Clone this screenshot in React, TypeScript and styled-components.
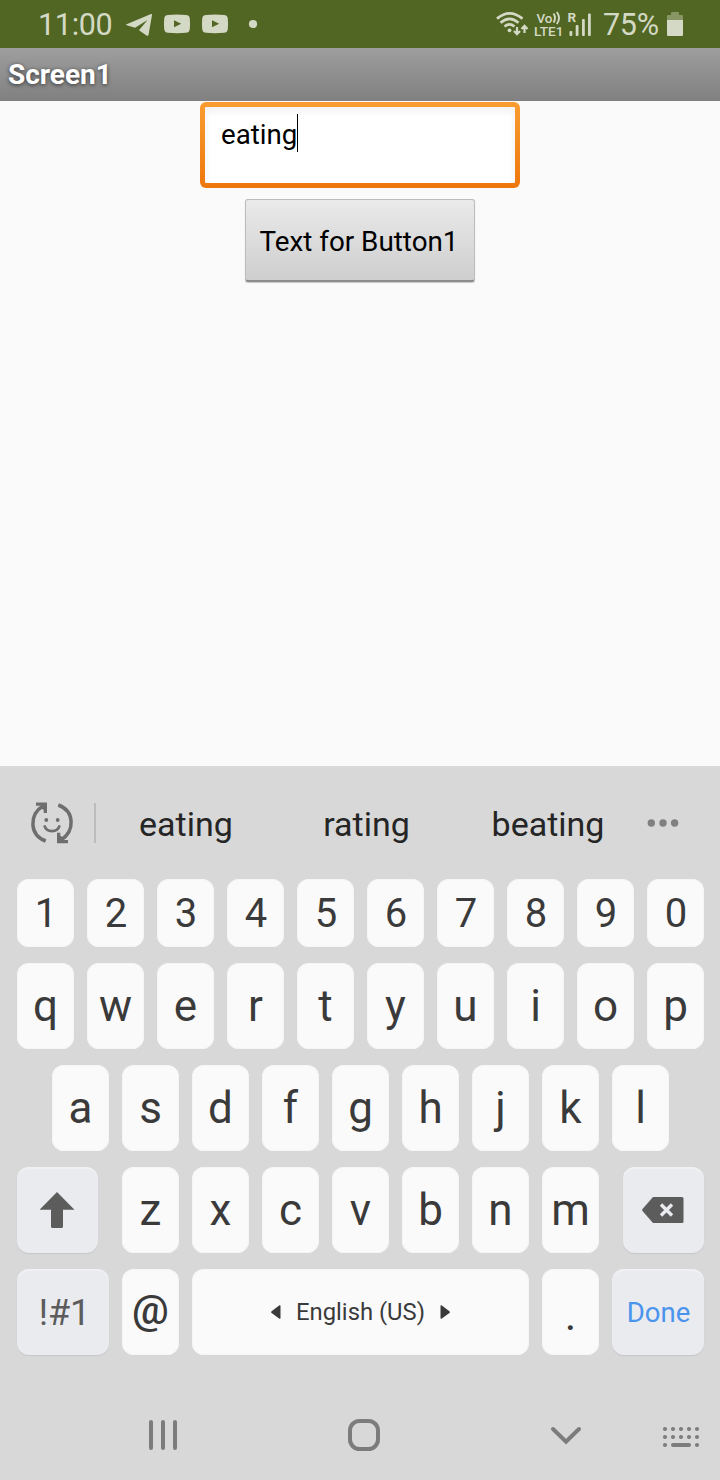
import React from "react";
import styled, { createGlobalStyle } from "styled-components";

const GlobalStyle = createGlobalStyle`
  * { box-sizing: border-box; }
  body { margin: 0; background: #fafafa; font-family: Roboto, "Liberation Sans", sans-serif; }
`;

const Phone = styled.div`
  display: flex;
  flex-direction: column;
  width: 720px;
  height: 1480px;
  overflow: hidden;
  background: #fafafa;
`;

const StatusBar = styled.header`
  display: flex;
  justify-content: space-between;
  height: 48px;
  flex: none;
  background: #526623;
  color: #d3d9c4;
`;

const StatusGroup = styled.div`
  display: flex;
  height: 48px;
`;

const StatusText = styled.span<{ $left: number; $width: number }>`
  margin-left: ${(p) => p.$left}px;
  width: ${(p) => p.$width}px;
  font-size: 30.5px;
  letter-spacing: -0.3px;
  line-height: 50px;
  white-space: nowrap;
`;

const TitleBar = styled.div`
  flex: none;
  height: 53px;
  padding-left: 8px;
  background: linear-gradient(#9e9e9e, #808080);
  color: #fff;
  font-size: 28px;
  font-weight: 700;
  line-height: 54px;
  text-shadow: 0 1px 4px rgba(0, 0, 0, 0.65);
`;

const Content = styled.main`
  display: flex;
  flex: 1;
  flex-direction: column;
  align-items: center;
  padding-top: 1px;
`;

const TextBox = styled.div`
  width: 320px;
  height: 86px;
  padding: 5px;
  border-radius: 6px;
  background: linear-gradient(#f99d31, #ee770c);
`;

const TextBoxInner = styled.div`
  display: flex;
  height: 76px;
  padding: 7px 16px;
  border-radius: 1px;
  background: #fff;
  box-shadow: inset 0 4px 8px rgba(0, 0, 0, 0.06);
  color: #000;
  font-size: 27.700px;
  line-height: 42px;
`;

const Caret = styled.span`
  width: 1px;
  height: 38px;
  background: #000;
`;

const FormButton = styled.button`
  width: 230px;
  height: 83px;
  margin: 11px 0 0;
  padding: 2px 2px 0 0;
  border: 1px solid #bcbcbc;
  border-bottom: 2px solid #8c8c8c;
  border-radius: 3px;
  background: linear-gradient(#eaeaea, #cecece);
  box-shadow: 0 1px 1px rgba(0, 0, 0, 0.2);
  color: #000;
  font-family: inherit;
  font-size: 27.800px;
  white-space: nowrap;
`;

const Keyboard = styled.section`
  flex: none;
  height: 714px;
  background: #d8d8d8;
`;

const Suggestions = styled.div`
  display: flex;
  height: 113px;
`;

const Divider = styled.span`
  width: 2px;
  height: 40px;
  margin: 37px 0 0 20px;
  background: #bcbcbc;
`;

const Suggestion = styled.span<{ $width: number }>`
  width: ${(p) => p.$width}px;
  color: #252525;
  font-size: 34px;
  line-height: 117px;
  text-align: center;
`;

const KeyRows = styled.div`
  display: flex;
  flex-direction: column;
  gap: 16px;
  padding: 0 16px 0 17px;
`;

const KeyRow = styled.div<{ $height?: number; $indent?: number }>`
  display: flex;
  gap: 13px;
  height: ${(p) => p.$height ?? 86}px;
  padding-left: ${(p) => p.$indent ?? 0}px;
`;

const Key = styled.div<{ $size?: number; $width?: number; $color?: string }>`
  display: flex;
  flex: none;
  align-items: center;
  justify-content: center;
  width: ${(p) => p.$width ?? 57}px;
  border-radius: 12px;
  background: #fafafa;
  box-shadow: inset 0 0 0 1px #f5f5f5;
  color: ${(p) => p.$color ?? "#3a3a3a"};
  font-size: ${(p) => p.$size ?? 44}px;
  line-height: 1;
`;

const NumberKey = styled(Key)`
  padding: 2px 0 0 1px;
`;

const AtKey = styled(Key)`
  padding-bottom: 3px;
  font-weight: 500;
`;

const FunctionKey = styled(Key)<{ $before?: number; $after?: number; $shift?: number }>`
  margin-left: ${(p) => p.$before ?? 0}px;
  margin-right: ${(p) => p.$after ?? 0}px;
  padding: ${(p) => (p.$shift ? 2 : 0)}px 0 0 ${(p) => p.$shift ?? 0}px;
  background: #e9ebef;
  box-shadow: inset 0 2px 1px #f0f1f3, 0 1px 1px #c6c7ca;
`;

const Period = styled(Key)`
  padding-top: 5px;
`;

const SpaceLabel = styled.span`
  width: 159px;
  padding-top: 1px;
  font-size: 23.800px;
  text-align: center;
`;

const NavIcons = styled.svg`
  display: block;
  margin-top: 35px;
`;

function NotificationIcons() {
  return (
    <svg width="140" height="48" viewBox="120 0 140 48" fill="#d3d9c4">
      <path d="M126 24.600 151 14q1.200-.4 1 .9l-3.400 19.600q-.4 2-2.100 1l-7.500-5.300 8.500-10.300-12.500 7.800-7.500-2.100q-2-.4-1.500-1z" />
      <YouTube x={164} />
      <YouTube x={202} />
      <circle cx="253" cy="24" r="4.1" />
    </svg>
  );
}

function YouTube({ x }: { x: number }) {
  return (
    <g transform={`translate(${x} 14.500)`}>
      <path fillRule="evenodd" d="M4 .5Q13 -.3 22 .5 25.500.7 25.800 4 26.300 9.300 25.800 14.500 25.500 18 22 18.300 13 19 4 18.300.5 18 .2 14.500-.3 9.300.2 4 .5.7 4 .5zM10 5.800v7l7.200-3.500z" />
    </g>
  );
}

function SignalIcons() {
  return (
    <svg width="98" height="48" viewBox="496 0 98 48" fill="#d3d9c4">
      <g fill="none" stroke="#d3d9c4" strokeWidth="2.700">
        <path d="M497 18.600Q509.500 8 522.500 18.600M500.500 22.800Q509.500 14.800 518.500 22.800M504.500 26.500Q509.500 22.300 514.500 26.500" />
        <path strokeWidth="2.200" d="M517 27v7m-3-3 3 3.200 3-3.200M524.500 33v-7m-3 3 3-3.200 3 3.200" />
        <path strokeWidth="1.900" d="M553.500 13.500q3 4.500 0 9M556.800 12q4.500 6 0 12" />
      </g>
      <circle cx="509.500" cy="30.300" r="1.900" />
      <g fontFamily="Roboto, sans-serif" fontWeight="500">
        <text x="536.500" y="22.600" fontSize="13.500" textLength="16" lengthAdjust="spacingAndGlyphs">Vo</text>
        <text x="534" y="36" fontSize="13.500" textLength="29.500" lengthAdjust="spacingAndGlyphs">LTE1</text>
        <text x="567.500" y="22" fontSize="13.500" fontWeight="700">R</text>
      </g>
      <rect x="569.500" y="31" width="2.800" height="5" rx="1" />
      <rect x="575.700" y="25" width="2.800" height="11" rx="1" />
      <rect x="582" y="19" width="2.800" height="17" rx="1" />
      <rect x="588" y="13.500" width="2.800" height="22.500" rx="1" />
    </svg>
  );
}

function BatteryIcon() {
  return (
    <svg width="53" height="48" viewBox="667 0 53 48" fill="#d3d9c4">
      <path fillOpacity=".42" d="M671 15v-2q0-1 1-1h6q1 0 1 1v2h3q1 0 1 1v4h-16v-4q0-1 1-1z" />
      <path d="M667 20h16v15q0 1-1 1h-14q-1 0-1-1z" />
    </svg>
  );
}

function EmojiSwapIcon() {
  return (
    <svg width="74" height="113" viewBox="0 766 74 113">
      <g fill="none" stroke="#6e6e6e" strokeWidth="3.500">
        <path d="M45.700 841C29.500 835 28.500 815 43.500 805.500" />
        <path d="M58.300 805C74.500 811 75.500 831 60.500 840.500" />
        <path strokeWidth="2.700" d="M44.300 825.300q1.800 5.800 7.700 5.800t7.700-5.800" />
      </g>
      <g fill="#6e6e6e">
        <path d="M36 802.500h11v10.500h-3.300v-3l-2.500-1.500.5-2.700H36z" />
        <path d="M68 843.300H57v-10.500h3.300v3l2.500 1.500-.5 2.700H68z" />
        <circle cx="46.300" cy="820" r="1.900" />
        <circle cx="57.700" cy="820" r="1.900" />
      </g>
    </svg>
  );
}

function MoreIcon() {
  return (
    <svg width="80" height="113" viewBox="640 766 80 113" fill="#808080">
      {[652.3, 664, 675.6].map((cx) => (
        <circle key={cx} cx={cx} cy="823" r="3.700" />
      ))}
    </svg>
  );
}

const topLetters = "qwertyuiop".split("");
const homeLetters = "asdfghjkl".split("");
const bottomLetters = "zxcvbnm".split("");

export default function App() {
  return (
    <Phone>
      <GlobalStyle />
      <StatusBar>
        <StatusGroup>
          <StatusText $left={38} $width={82}>11:00</StatusText>
          <NotificationIcons />
        </StatusGroup>
        <StatusGroup>
          <SignalIcons />
          <StatusText $left={9} $width={64}>75%</StatusText>
          <BatteryIcon />
        </StatusGroup>
      </StatusBar>
      <TitleBar>Screen1</TitleBar>
      <Content>
        <TextBox>
          <TextBoxInner>
            eating
            <Caret />
          </TextBoxInner>
        </TextBox>
        <FormButton>Text for Button1</FormButton>
      </Content>
      <Keyboard>
        <Suggestions>
          <EmojiSwapIcon />
          <Divider />
          <Suggestion $width={180}>eating</Suggestion>
          <Suggestion $width={181}>rating</Suggestion>
          <Suggestion $width={182}>beating</Suggestion>
          <MoreIcon />
        </Suggestions>
        <KeyRows>
          <KeyRow $height={68}>
            {"1234567890".split("").map((k) => (
              <NumberKey key={k} $size={40}>{k}</NumberKey>
            ))}
          </KeyRow>
          <KeyRow>
            {topLetters.map((k) => (
              <Key key={k}>{k}</Key>
            ))}
          </KeyRow>
          <KeyRow $indent={35}>
            {homeLetters.map((k) => (
              <Key key={k}>{k}</Key>
            ))}
          </KeyRow>
          <KeyRow>
            <FunctionKey $width={81} $after={11}>
              <svg width="36" height="38" viewBox="0 0 36 38" fill="#5c5c5c">
                <path d="M17 1 34.500 18.700H23V35.500q0 1.500-1.500 1.500h-9q-1.500 0-1.500-1.500V18.700H-.5z" />
              </svg>
            </FunctionKey>
            {bottomLetters.map((k) => (
              <Key key={k}>{k}</Key>
            ))}
            <FunctionKey $width={81} $before={11}>
              <svg width="43" height="26" viewBox="0 0 43 26">
                <path fill="#5c5c5c" d="M11 0h29q1.500 0 1.500 1.500v23q0 1.500-1.500 1.500H11L.5 14q-.7-1 0-2z" />
                <path stroke="#e9ebef" strokeWidth="3.400" d="m19 7.500 11 11m0-11-11 11" />
              </svg>
            </FunctionKey>
          </KeyRow>
          <KeyRow>
            <FunctionKey $width={92} $size={36} $shift={3} $color="#5c5c5c">!#1</FunctionKey>
            <AtKey $size={41}>@</AtKey>
            <Key $width={337}>
              <svg width="10" height="14" viewBox="0 0 10 14" fill="#3a3a3a">
                <path d="M9.500 1v12q0 1-1 .7L.6 8q-1-.9 0-1.700L8.500.3q1-.3 1 .7z" />
              </svg>
              <SpaceLabel>English (US)</SpaceLabel>
              <svg width="10" height="14" viewBox="0 0 10 14" fill="#3a3a3a">
                <path d="M.5 1v12q0 1 1 .7L9.400 8q1-.9 0-1.700L1.500.3q-1-.3-1 .7z" />
              </svg>
            </Key>
            <Period>.</Period>
            <FunctionKey $width={92} $size={27.5} $shift={1} $color="#4b94ee">Done</FunctionKey>
          </KeyRow>
        </KeyRows>
        <NavIcons width="720" height="90" viewBox="0 1390 720 90">
          <path fill="none" stroke="#7c7c7c" strokeWidth="4" strokeLinecap="round" d="M151 1422v26m12-26v26m12-26v26" />
          <rect x="350" y="1421" width="28" height="28" rx="9.500" fill="none" stroke="#7c7c7c" strokeWidth="4" />
          <path fill="none" stroke="#7c7c7c" strokeWidth="4" strokeLinecap="round" d="m553 1429 13 12.800 13-12.800" />
          <g fill="#7c7c7c">
            {[665, 673, 681, 689, 697].map((cx) => (
              <React.Fragment key={cx}>
                <circle cx={cx} cy="1429" r="2.100" />
                <circle cx={cx} cy="1437" r="2.100" />
              </React.Fragment>
            ))}
            <circle cx="665" cy="1445" r="2.100" />
            <rect x="671" y="1443" width="20" height="4" rx="2" />
            <circle cx="697" cy="1445" r="2.100" />
          </g>
        </NavIcons>
      </Keyboard>
    </Phone>
  );
}
